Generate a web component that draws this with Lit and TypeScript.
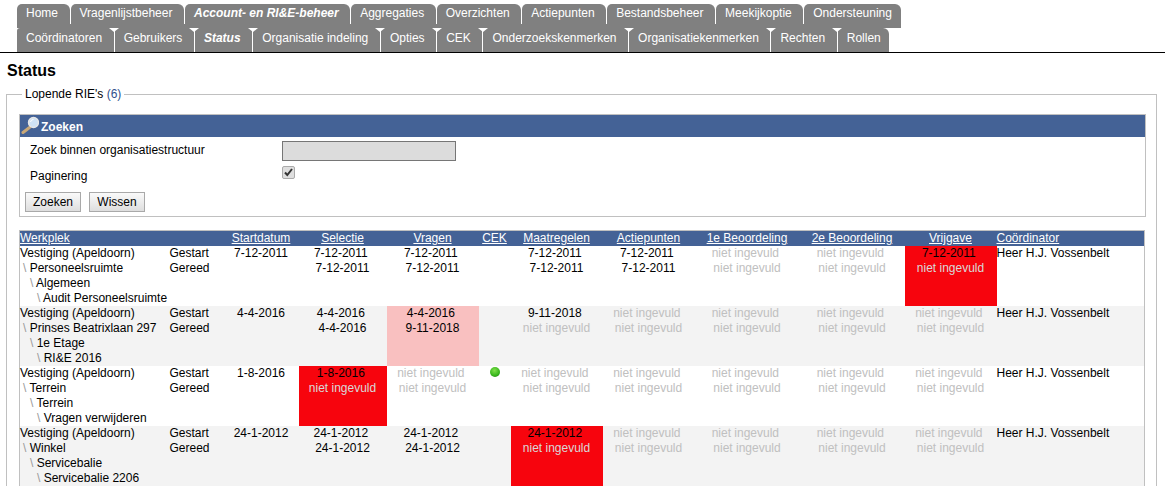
import { LitElement, html, css } from "lit";
import { customElement } from "lit/decorators.js";

const N = "niet ingevuld";
type Cell = { l1?: string; l2?: string; bg?: "red" | "pink"; dot?: boolean };
type Row = { path: string[]; start: string; cells: Cell[] };
const c = (l1?: string, l2?: string, bg?: "red" | "pink"): Cell => ({ l1, l2, bg });

const rows: Row[] = [
  { path: ["Vestiging (Apeldoorn)", "Personeelsruimte", "Algemeen", "Audit Personeelsruimte"], start: "7-12-2011",
    cells: [c("7-12-2011", "7-12-2011"), c("7-12-2011", "7-12-2011"), c(), c("7-12-2011", "7-12-2011"), c("7-12-2011", "7-12-2011"), c(N, N), c(N, N), c("7-12-2011", N, "red")] },
  { path: ["Vestiging (Apeldoorn)", "Prinses Beatrixlaan 297", "1e Etage", "RI&E 2016"], start: "4-4-2016",
    cells: [c("4-4-2016", "4-4-2016"), c("4-4-2016", "9-11-2018", "pink"), c(), c("9-11-2018", N), c(N, N), c(N, N), c(N, N), c(N, N)] },
  { path: ["Vestiging (Apeldoorn)", "Terrein", "Terrein", "Vragen verwijderen"], start: "1-8-2016",
    cells: [c("1-8-2016", N, "red"), c(N, N), { dot: true }, c(N, N), c(N, N), c(N, N), c(N, N), c(N, N)] },
  { path: ["Vestiging (Apeldoorn)", "Winkel", "Servicebalie", "Servicebalie 2206"], start: "24-1-2012",
    cells: [c("24-1-2012", "24-1-2012"), c("24-1-2012", "24-1-2012"), c(), c("24-1-2012", N, "red"), c(N, N), c(N, N), c(N, N), c(N, N)] },
];

const top = ["Home", "Vragenlijstbeheer", "Account- en RI&E-beheer", "Aggregaties", "Overzichten", "Actiepunten", "Bestandsbeheer", "Meekijkoptie", "Ondersteuning"];
const sub = ["Coördinatoren", "Gebruikers", "Status", "Organisatie indeling", "Opties", "CEK", "Onderzoekskenmerken", "Organisatiekenmerken", "Rechten", "Rollen"];
const heads = ["Selectie", "Vragen", "CEK", "Maatregelen", "Actiepunten", "1e Beoordeling", "2e Beoordeling", "Vrijgave"];

@customElement("app-root")
export class AppRoot extends LitElement {
  static styles = css`
    :host { display: block; width: 1165px; height: 486px; overflow: hidden; background: #fff; font: 12px/15px "Liberation Sans", Arial, sans-serif; color: #000; }
    .nav { padding: 4px 0 0 17px; border-bottom: 1px solid #000; height: 48px; }
    .tabrow { display: flex; height: 24px; }
    .tabrow.one { gap: 1px; }
    .tab { background: #808080; color: #fff; height: 24px; white-space: nowrap; box-sizing: border-box; position: relative; }
    .tabrow.one .tab { padding: 1px 11.5px 0 9px; line-height: 17px; border-radius: 5px 6px 0 0; }
    .tabrow.one .tab:last-child { padding-right: 9.5px; }
    .tabrow.one .tab + .tab::before { content: ""; position: absolute; left: -1px; bottom: 0; width: 1px; height: 4px; background: #808080; }
    .tabrow.two .tab { padding: 2px 11.6px 0 9px; line-height: 17px; margin-left: 1px; }
    .tabrow.two .tab:last-child { padding-right: 8.5px; }
    .tabrow.two .tab + .tab::before { content: ""; position: absolute; left: -1px; top: 0; width: 1px; height: 20px; background: #fff; }
    .tabrow.two .tab + .tab::after { content: ""; position: absolute; left: -5.5px; top: 0; width: 0; height: 0; border-left: 5px solid transparent; border-right: 5px solid transparent; border-top: 4px solid #fff; }
    .tabrow.two .tab:first-child { margin-left: 0; border-top-left-radius: 3px; }
    .tabrow.two .tab:last-child { border-top-right-radius: 6px; }
    .sel { font-weight: bold; font-style: italic; }
    h1 { font: bold 16px/18px "Liberation Sans", Arial, sans-serif; margin: 9px 0 0 7px; height: 18px; }
    fieldset { margin: 7px 0 0 6px; width: 1151px; box-sizing: border-box; border: 1px solid #c0c0c0; border-bottom: none; padding: 0 10px 0 12px; height: 400px; min-width: 0; }
    legend { margin-left: 3px; padding: 0 3px; line-height: 15px; }
    legend span { color: #33508c; }
    .search { margin-top: 12px; border: 1px solid #c0c0c0; height: 103px; box-sizing: border-box; }
    .shead { background: #446296; color: #fff; font-weight: bold; height: 22px; display: flex; align-items: center; gap: 2px; padding-left: 1px; }
    .shead svg { display: block; margin-top: -3px; }
    .shead span { padding-top: 2px; }
    .srow { display: flex; align-items: center; padding-left: 10px; }
    .lab { width: 252px; }
    .s1 { height: 25px; margin-top: 1px; }
    .inp { width: 174px; height: 20px; background: #dcdcdc; border: 1px solid #767676; box-sizing: border-box; }
    .s2 { height: 26px; }
    .chk { width: 11px; height: 11px; border: 1px solid #aaa; border-radius: 2px; background: #dedede; display: flex; margin-top: -8px; }
    .btns { display: flex; gap: 8px; padding-left: 5px; margin-top: 3px; }
    button { font: 12px "Liberation Sans", Arial, sans-serif; height: 20px; width: 56px; padding: 0; border: 1px solid #a9a9a9; background: linear-gradient(#fafafa, #dedede); color: #000; border-radius: 0; }
    table { margin-top: 13px; border-collapse: collapse; table-layout: fixed; width: 1126px; border-top: 1px solid #c0c0c0; border-right: 1px solid #c0c0c0; border-left: 1px solid #c0c0c0; }
    th { background: #446296; color: #fff; font-weight: normal; padding: 0; height: 15px; text-decoration: underline; line-height: 15px; }
    th.l, td.l { text-align: left; }
    td { padding: 0; text-align: center; vertical-align: top; line-height: 15px; height: 60px; white-space: nowrap; }
    tr.alt td { background: #f3f3f3; }
    tr td.red { background: #f7040d; }
    tr td.pink { background: #f9c0c0; }
    .m { color: #c0c0c0; }
    td.red .m { color: #d8d8d8; }
    .bs { color: #999; }
    .p1 { padding-left: 3px; } .p2 { padding-left: 10px; } .p3 { padding-left: 17px; }
    .dot { display: block; width: 10px; height: 10px; border-radius: 50%; margin: 1px auto 0; background: radial-gradient(circle at 45% 35%, #7fe04a, #37b51c 60%, #1b6e10); }
  `;

  private val(v?: string) {
    if (!v) return "";
    return v === N ? html`<span class="m">${v}</span>` : v;
  }

  render() {
    return html`
      <div class="nav">
        <div class="tabrow one">${top.map((t, i) => html`<div class="tab ${i === 2 ? "sel" : ""}">${t}</div>`)}</div>
        <div class="tabrow two">${sub.map((t, i) => html`<div class="tab ${i === 2 ? "sel" : ""}">${t}</div>`)}</div>
      </div>
      <h1>Status</h1>
      <fieldset>
        <legend>Lopende RIE's <span>(6)</span></legend>
        <div class="search">
          <div class="shead">
            <svg width="18" height="18" viewBox="0 0 18 18"><path d="M2 16.5 8.5 11.5" stroke="#c9a878" stroke-width="3" stroke-linecap="round"/><circle cx="12.5" cy="6.5" r="5" fill="#cfe2f5" stroke="#e6e6e6" stroke-width="1.4"/><path d="M9.5 6a3 3 0 0 1 3-2.5" stroke="#fff" fill="none"/></svg>
            <span>Zoeken</span>
          </div>
          <div class="srow s1"><div class="lab">Zoek binnen organisatiestructuur</div><div class="inp"></div></div>
          <div class="srow s2"><div class="lab">Paginering</div><div class="chk"><svg width="11" height="11" viewBox="0 0 11 11"><path d="M2 5.5 4.3 8 9 2" stroke="#333" stroke-width="2" fill="none"/></svg></div></div>
          <div class="btns"><button>Zoeken</button><button>Wissen</button></div>
        </div>
        <table>
          <colgroup><col style="width:150px"><col style="width:54px"><col style="width:75px"><col style="width:88px"><col style="width:92px"><col style="width:32px"><col style="width:92px"><col style="width:92px"><col style="width:105px"><col style="width:105px"><col style="width:92px"><col></colgroup>
          <thead><tr>
            <th class="l">Werkplek</th><th></th><th>Startdatum</th>
            ${heads.map((h) => html`<th>${h}</th>`)}
            <th class="l">Coördinator</th>
          </tr></thead>
          <tbody>
            ${rows.map((r, i) => html`<tr class="${i % 2 ? "alt" : ""}">
              <td class="l">${r.path[0]}<br><span class="p1"><span class="bs">\\</span> ${r.path[1]}</span><br><span class="p2"><span class="bs">\\</span> ${r.path[2]}</span><br><span class="p3"><span class="bs">\\</span> ${r.path[3]}</span></td>
              <td class="l">Gestart<br>Gereed</td>
              <td>${r.start}</td>
              ${r.cells.map((x) => html`<td class="${x.bg ?? ""}">${x.dot ? html`<span class="dot"></span>` : html`${this.val(x.l1)}${x.l1 ? "\u00a0" : ""}<br>${this.val(x.l2)}`}</td>`)}
              <td class="l">Heer H.J. Vossenbelt</td>
            </tr>`)}
          </tbody>
        </table>
      </fieldset>
    `;
  }
}
